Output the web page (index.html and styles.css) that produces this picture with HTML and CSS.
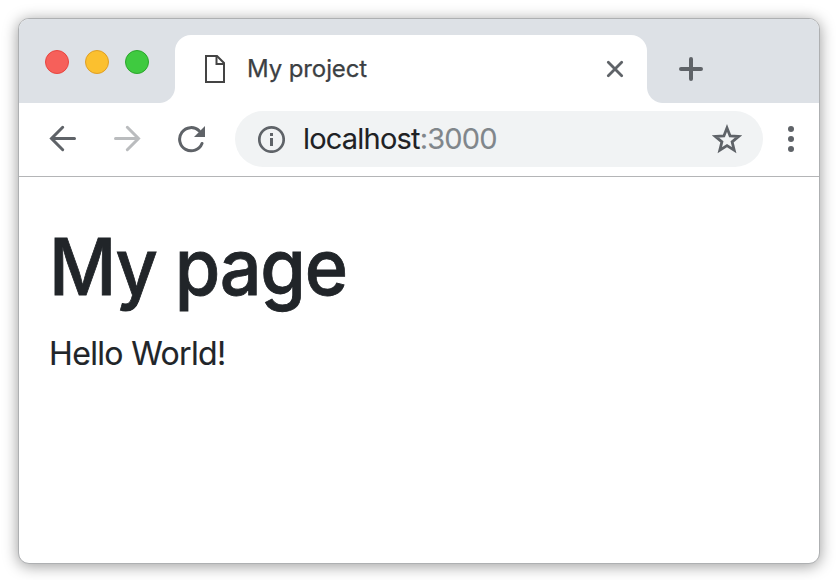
FILE: index.html
```html
<!DOCTYPE html>
<html lang="en">
<head>
<meta charset="utf-8">
<title>My project</title>
<link rel="stylesheet" href="styles.css">
</head>
<body>
<div class="window">
  <header class="tabbar">
    <div class="lights">
      <span class="light red"></span>
      <span class="light yellow"></span>
      <span class="light green"></span>
    </div>
    <div class="tab">
      <svg class="file" width="20" height="28" viewBox="0 0 20 28" fill="none" stroke="#444" stroke-width="2"><path d="M1 1H12L19 8V27H1Z"/><path d="M11.5 1V9H19"/></svg>
      <span class="tab-title">My project</span>
      <svg class="close" width="20" height="20" viewBox="0 0 20 20" stroke="#5f6368" stroke-width="2.8" stroke-linecap="round"><path d="M3.3 3.3L16.7 16.7M16.7 3.3L3.3 16.7"/></svg>
    </div>
    <svg class="plus" width="24" height="24" viewBox="0 0 24 24" stroke="#5f6368" stroke-width="4" stroke-linecap="round"><path d="M2 12H22M12 2V22"/></svg>
  </header>
  <nav class="toolbar">
    <svg width="28" height="28" viewBox="0 0 28 28" fill="none" stroke="#5f6368" stroke-width="3" stroke-linecap="round"><path d="M25.5 13.5H3M13.7 2.3L2.5 13.5L13.7 24.7"/></svg>
    <svg width="28" height="28" viewBox="0 0 28 28" fill="none" stroke="#babcbe" stroke-width="3" stroke-linecap="round"><path d="M2.5 13.5H25M14.3 2.3L25.5 13.5L14.3 24.7"/></svg>
    <svg width="28" height="28" viewBox="0 0 28 28"><path d="M25 18.5A11.6 11.6 0 1 1 22.2 5.8" fill="none" stroke="#5f6368" stroke-width="3" stroke-linecap="round"/><path d="M28 1V12H17Z" fill="#5f6368"/></svg>
    <div class="address">
      <svg width="28" height="28" viewBox="0 0 28 28"><circle cx="14.5" cy="14.5" r="12.2" fill="none" stroke="#5f6368" stroke-width="2.7"/><path d="M13 8H16V11H13ZM13 13H16V21H13Z" fill="#5f6368"/></svg>
      <span class="url">localhost<span class="port">:3000</span></span>
      <svg class="star" width="30" height="30" viewBox="0 0 30 30"><path d="M15 3.9L18.1 11.9L26.7 12.4L20.1 17.8L22.2 26.1L15 21.6L7.8 26.1L9.9 17.8L3.3 12.4L11.9 11.9Z" fill="none" stroke="#5f6368" stroke-width="2.8"/></svg>
    </div>
    <svg class="menu" width="6" height="28" viewBox="0 0 6 28" fill="#5f6368"><circle cx="3" cy="4" r="3"/><circle cx="3" cy="14" r="3"/><circle cx="3" cy="24" r="3"/></svg>
  </nav>
  <main class="page">
    <h1>My page</h1>
    <p>Hello World!</p>
  </main>
</div>
</body>
</html>
```
FILE: styles.css
```css
* { box-sizing: border-box; }
body {
  margin: 0;
  padding: 18px 16px 16px 18px;
  height: 580px;
  background: #fff;
  font-family: Inter, "Liberation Sans", sans-serif;
  overflow: hidden;
}
.window {
  width: 802px;
  height: 546px;
  border: 1px solid #aeb0b2;
  border-radius: 11px;
  background: #fff;
  box-shadow: 0 2px 15px rgba(0, 0, 0, .4);
  overflow: hidden;
}
svg { display: block; flex: none; }
.tabbar {
  display: flex;
  height: 84px;
  background: #dde1e6;
}
.lights {
  display: flex;
  gap: 16px;
  width: 156px;
  padding: 31px 0 0 26px;
}
.light {
  width: 24px;
  height: 24px;
  border: 1px solid;
  border-radius: 50%;
}
.red { background: #f6605a; border-color: #e8453f; }
.yellow { background: #fbc02f; border-color: #df9f25; }
.green { background: #3fca40; border-color: #2ba62c; }
.tab {
  position: relative;
  display: flex;
  align-items: center;
  width: 472px;
  height: 68px;
  margin-top: 16px;
  padding: 0 22px 0 30px;
  border-radius: 16px 16px 0 0;
  background: #fff;
}
.tab::before, .tab::after {
  content: "";
  position: absolute;
  bottom: 0;
  width: 16px;
  height: 16px;
}
.tab::before { left: -16px; background: radial-gradient(circle at 0 0, transparent 15.5px, #fff 16.5px); }
.tab::after { right: -16px; background: radial-gradient(circle at 100% 0, transparent 15.5px, #fff 16.5px); }
.tab-title {
  margin-left: 22px;
  font-size: 24px;
  line-height: 30px;
  letter-spacing: -.1px;
  color: #3c4043;
  -webkit-text-stroke: .25px;
  white-space: nowrap;
}
.close { margin-left: auto; }
.plus { margin: 38px 0 0 32px; }
.toolbar {
  display: flex;
  align-items: center;
  gap: 36px;
  height: 74px;
  padding: 0 25px 1px 30px;
  border-bottom: 1px solid #b4b5b7;
}
.address {
  display: flex;
  align-items: center;
  width: 528px;
  height: 56px;
  margin-left: -6px;
  padding: 0 21px 0 22px;
  border-radius: 28px;
  background: #f1f3f4;
}
.url {
  margin-left: 18px;
  font-size: 29px;
  line-height: 36px;
  letter-spacing: -.8px;
  color: #202124;
  -webkit-text-stroke: .1px;
  white-space: nowrap;
}
.port { color: #80868b; }
.star { margin-left: auto; }
.menu { margin-left: -11px; }
.page { padding: 42px 30px; color: #212529; }
h1 {
  margin: 0;
  font-size: 78px;
  font-weight: 500;
  line-height: 96px;
  letter-spacing: -1.4px;
  -webkit-text-stroke: .8px;
  white-space: nowrap;
  transform: scaleX(.945);
  transform-origin: 0 0;
}
p {
  margin: 15px 0 0;
  font-size: 32px;
  line-height: 48px;
  letter-spacing: -.65px;
  -webkit-text-stroke: .15px;
  white-space: nowrap;
}
```
